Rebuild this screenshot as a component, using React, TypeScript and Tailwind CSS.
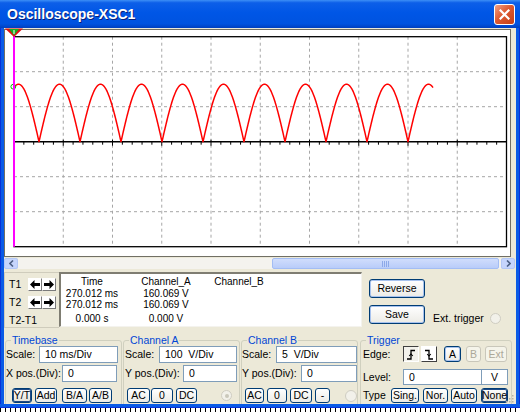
import React from 'react';

type Variant = 'normal' | 'selected' | 'focus' | 'disabled';

function XpButton({
  children,
  className = '',
  variant = 'normal',
}: {
  children: React.ReactNode;
  className?: string;
  variant?: Variant;
}) {
  const look =
    variant === 'disabled'
      ? 'border-[#C9C7BA] bg-[#F5F4EA] text-[#ACA899]'
      : variant === 'selected'
        ? 'border-[#003C74] bg-linear-to-b from-white to-[#E3E1D6] text-black shadow-[inset_0_0_0_1px_#1F4A86]'
        : variant === 'focus'
          ? 'border-[#003C74] bg-linear-to-b from-white to-[#ECEBE6] text-black shadow-[inset_0_0_0_1px_#A7C2EE]'
          : 'border-[#003C74] bg-linear-to-b from-white to-[#ECEBE6] text-black';
  return (
    <div className={`flex h-full items-center justify-center rounded-[3px] border text-[10.5px] leading-none ${look} ${className}`}>
      {children}
    </div>
  );
}

function Field({ children, className = '', center = false }: { children: React.ReactNode; className?: string; center?: boolean }) {
  return (
    <div
      className={`flex h-full items-center whitespace-pre border border-[#7F9DB9] bg-white text-[10.5px] leading-none ${center ? 'justify-center' : 'pl-[5px]'} ${className}`}
    >
      {children}
    </div>
  );
}

function Radio({ dot = false, className = '' }: { dot?: boolean; className?: string }) {
  return (
    <div className={`flex h-[11px] w-[11px] items-center justify-center rounded-full border border-[#CFCDC2] bg-[#F2F1EA] ${className}`}>
      {dot && <div className="h-[4px] w-[4px] rounded-full bg-[#CAC8BB]" />}
    </div>
  );
}

function ArrowBtn({ dir }: { dir: 'left' | 'right' }) {
  return (
    <div className="flex h-[13px] w-[14px] items-center justify-center border border-t-white border-l-white border-r-[#7A7A7A] border-b-[#7A7A7A] bg-white">
      <svg width="10" height="9" viewBox="0 0 10 9">
        {dir === 'left' ? (
          <path d="M0 4.5 L4.5 0 V3 H10 V6 H4.5 V9 Z" fill="#000" />
        ) : (
          <path d="M10 4.5 L5.5 0 V3 H0 V6 H5.5 V9 Z" fill="#000" />
        )}
      </svg>
    </div>
  );
}

function TitleBar() {
  return (
    <div className="flex h-[28px] items-center justify-between bg-[linear-gradient(180deg,#3D8FF6_0%,#0D5FE8_10%,#0056E6_45%,#0053E0_85%,#003FBF_100%)] pl-[7px] pr-[5px]">
      <span className="font-['Liberation_Sans_Narrow','Liberation_Sans',Arial,sans-serif] text-[14px] font-bold leading-none text-white [text-shadow:1px_1px_0_#0A1F78]">
        Oscilloscope-XSC1
      </span>
      <div className="flex h-[21px] w-[21px] items-center justify-center rounded-[3px] border border-white bg-[linear-gradient(135deg,#F3A185_0%,#DD5A32_45%,#C53E14_100%)]">
        <svg width="11" height="11" viewBox="0 0 11 11">
          <path d="M1.5 1.5 L9.5 9.5 M9.5 1.5 L1.5 9.5" stroke="#fff" strokeWidth="2.2" strokeLinecap="square" />
        </svg>
      </div>
    </div>
  );
}

function Plot() {
  const x0 = 9;
  const y0 = 6.7;
  const dx = 49.25;
  const dy = 35;
  const x1 = x0 + dx * 10;
  const y1 = y0 + dy * 6;
  const axis = y0 + dy * 3;

  const pts: string[] = [];
  for (let x = 9; x <= 428; x += 0.5) {
    const y = axis - 57.5 * Math.abs(Math.sin((Math.PI * (x - 34)) / 41));
    pts.push(`${x.toFixed(1)},${y.toFixed(2)}`);
  }

  const ticks = [];
  for (let k = 1; k < 50; k++) {
    const x = x0 + (k * dx) / 5;
    const major = k % 5 === 0;
    ticks.push(
      <line key={k} x1={x} x2={x} y1={major ? axis - 2 : axis} y2={major ? axis + 4 : axis + 3} stroke="#000" strokeWidth="1" />
    );
  }

  return (
    <svg width="505" height="226" viewBox="0 0 505 226" className="block overflow-visible">
      {[1, 2, 3, 4, 5, 6, 7, 8, 9].map((i) => (
        <line key={`v${i}`} x1={x0 + dx * i} x2={x0 + dx * i} y1={y0} y2={y1} stroke="#A6A6A6" strokeWidth="1" strokeDasharray="3 3" />
      ))}
      {[1, 2, 4, 5].map((j) => (
        <line key={`h${j}`} x1={x0} x2={x1} y1={y0 + dy * j} y2={y0 + dy * j} stroke="#A6A6A6" strokeWidth="1" strokeDasharray="3 3" />
      ))}
      <rect x={x0} y={y0} width={x1 - x0} height={y1 - y0} fill="none" stroke="#000" strokeWidth="1.3" />
      <line x1={x0} x2={x1} y1={axis} y2={axis} stroke="#000" strokeWidth="1.6" />
      {ticks}
      <polyline points={pts.join(' ')} fill="none" stroke="#FF0000" strokeWidth="1.5" strokeLinejoin="round" />
      <circle cx="8.3" cy="56.7" r="2.4" fill="none" stroke="#00C000" strokeWidth="1" />
      <line x1="9" x2="9" y1="-1" y2={y1} stroke="#FF00FF" strokeWidth="2" />
      <polygon points="0,-1.5 18,-1.5 9,7" fill="#E01010" />
      <polygon points="4,-1 14,-1 9,5.5" fill="#10B020" />
      <line x1="9" x2="9" y1="0" y2="4" stroke="#fff" strokeWidth="1" />
    </svg>
  );
}

function ScrollBar() {
  return (
    <div className="mt-[1px] flex h-[11px] w-[511px]">
      <div className="flex w-[14px] items-center justify-center rounded-[2px] border border-[#B4C8F6] bg-[#C6D5FC]">
        <svg width="5" height="7" viewBox="0 0 5 7">
          <path d="M4 0.5 L1 3.5 L4 6.5" fill="none" stroke="#4D6185" strokeWidth="1.6" />
        </svg>
      </div>
      <div className="flex flex-1 bg-[#F4F3EE] pl-[254px]">
        <div className="flex w-[227px] items-center justify-center gap-[1px] rounded-[2px] border border-[#A3BDF4] bg-linear-to-b from-[#D0DDFC] to-[#B9CCF9]">
          <div className="h-[6px] w-[1px] bg-[#8DA9E8]" />
          <div className="h-[6px] w-[1px] bg-[#8DA9E8]" />
          <div className="h-[6px] w-[1px] bg-[#8DA9E8]" />
          <div className="h-[6px] w-[1px] bg-[#8DA9E8]" />
        </div>
      </div>
      <div className="flex w-[14px] items-center justify-center rounded-[2px] border border-[#B4C8F6] bg-[#C6D5FC]">
        <svg width="5" height="7" viewBox="0 0 5 7">
          <path d="M1 0.5 L4 3.5 L1 6.5" fill="none" stroke="#4D6185" strokeWidth="1.6" />
        </svg>
      </div>
    </div>
  );
}

function Readout() {
  return (
    <div className="flex h-[56px]">
      <div className="flex w-[55px] flex-col border-l border-t border-b border-[#CFCCBC] pl-[4px] pt-[5px] text-[10.5px] leading-none">
        <div className="flex h-[13px] items-center">
          <span className="w-[19px]">T1</span>
          <ArrowBtn dir="left" />
          <ArrowBtn dir="right" />
        </div>
        <div className="mt-[5px] flex h-[13px] items-center">
          <span className="w-[19px]">T2</span>
          <ArrowBtn dir="left" />
          <ArrowBtn dir="right" />
        </div>
        <div className="mt-[5px] leading-[12px]">T2-T1</div>
      </div>
      <div className="h-[55px] w-[303px] border-t-2 border-l-2 border-r border-b border-t-[#7F7D72] border-l-[#7F7D72] border-r-[#F4F3EE] border-b-[#F4F3EE] bg-white pt-[2px] text-[10px] leading-[11.5px]">
        <div className="flex">
          <div className="w-[62px] text-center">Time</div>
          <div className="w-[86px] text-center">Channel_A</div>
          <div className="w-[60px] text-center">Channel_B</div>
        </div>
        <div className="flex">
          <div className="w-[62px] text-center">270.012 ms</div>
          <div className="w-[86px] text-center">160.069 V</div>
        </div>
        <div className="flex">
          <div className="w-[62px] text-center">270.012 ms</div>
          <div className="w-[86px] text-center">160.069 V</div>
        </div>
        <div className="mt-[2px] flex">
          <div className="w-[62px] text-center">0.000 s</div>
          <div className="w-[86px] text-center">0.000 V</div>
        </div>
      </div>
      <div className="ml-[7px] flex w-[56px] flex-col pt-[7px]">
        <div className="h-[19px]">
          <XpButton variant="focus">Reverse</XpButton>
        </div>
        <div className="mt-[7px] h-[19px]">
          <XpButton variant="focus">Save</XpButton>
        </div>
      </div>
      <div className="ml-[8px] flex h-[12px] items-center self-end mb-[4px] text-[10.5px] leading-none">
        <span>Ext. trigger</span>
        <Radio className="ml-[6px]" />
      </div>
    </div>
  );
}

function Group({ title, className, children }: { title: string; className: string; children: React.ReactNode }) {
  return (
    <fieldset className={`m-0 h-[74px] min-w-0 rounded-[3px] border border-[#D0D0BF] p-0 ${className}`}>
      <legend className="ml-[5px] px-[1px] text-[10.5px] leading-[12px] text-[#0046D5]">{title}</legend>
      {children}
    </fieldset>
  );
}

function Controls() {
  return (
    <div className="mt-[6px] flex text-[10.5px] leading-none">
      <Group title="Timebase" className="ml-[1px] w-[117px]">
        <div className="flex h-[17px] items-center">
          <span className="w-[33px]">Scale:</span>
          <Field className="w-[79px]">10 ms/Div</Field>
        </div>
        <div className="mt-[2px] flex h-[17px] items-center">
          <span className="w-[56px]">X pos.(Div):</span>
          <Field className="w-[55px]">0</Field>
        </div>
        <div className="mt-[6px] flex h-[15px] pl-[6px]">
          <XpButton variant="selected" className="w-[20px]">Y/T</XpButton>
          <XpButton className="ml-[3px] w-[22px]">Add</XpButton>
          <XpButton className="ml-[5px] w-[25px]">B/A</XpButton>
          <XpButton className="ml-[2px] w-[23px]">A/B</XpButton>
        </div>
      </Group>
      <Group title="Channel A" className="ml-[1px] w-[117px]">
        <div className="flex h-[17px] items-center pl-[1px]">
          <span className="w-[34px]">Scale:</span>
          <Field className="w-[78px]">100  V/Div</Field>
        </div>
        <div className="mt-[2px] flex h-[17px] items-center pl-[1px]">
          <span className="w-[58px]">Y pos.(Div):</span>
          <Field className="w-[54px]">0</Field>
        </div>
        <div className="mt-[6px] flex h-[15px] items-center pl-[3px]">
          <XpButton className="w-[23px]">AC</XpButton>
          <XpButton className="ml-[1px] w-[22px]">0</XpButton>
          <XpButton className="ml-[3px] w-[21px]">DC</XpButton>
          <Radio dot className="ml-[24px]" />
        </div>
      </Group>
      <Group title="Channel B" className="ml-[1px] w-[117px]">
        <div className="flex h-[17px] items-center">
          <span className="w-[34px]">Scale:</span>
          <Field className="w-[81px]">5  V/Div</Field>
        </div>
        <div className="mt-[2px] flex h-[17px] items-center">
          <span className="w-[59px]">Y pos.(Div):</span>
          <Field className="w-[56px]">0</Field>
        </div>
        <div className="mt-[6px] flex h-[15px] items-center pl-[3px]">
          <XpButton className="w-[19px]">AC</XpButton>
          <XpButton className="ml-[3px] w-[20px]">0</XpButton>
          <XpButton className="ml-[3px] w-[22px]">DC</XpButton>
          <XpButton className="ml-[3px] w-[15px]">-</XpButton>
          <Radio className="ml-[15px] h-[12px] w-[12px]" />
        </div>
      </Group>
      <Group title="Trigger" className="ml-[2px] w-[152px]">
        <div className="flex h-[16px] items-center pl-[2px]">
          <span className="w-[40px]">Edge:</span>
          <div className="flex h-full w-[16px] items-center justify-center border border-t-[#404040] border-l-[#404040] border-r-white border-b-white bg-[#F3F2EC]">
            <svg width="10" height="11" viewBox="0 0 10 11">
              <path d="M1 10 H5 V1.5 H9" fill="none" stroke="#000" strokeWidth="1.3" />
              <path d="M3.2 7 L5 5 L6.8 7" fill="none" stroke="#000" strokeWidth="1.1" />
            </svg>
          </div>
          <div className="ml-[2px] flex h-full w-[16px] items-center justify-center border border-t-white border-l-white border-r-[#404040] border-b-[#404040] bg-white">
            <svg width="10" height="11" viewBox="0 0 10 11">
              <path d="M1 1.5 H5 V10 H9" fill="none" stroke="#000" strokeWidth="1.3" />
              <path d="M3.2 5 L5 7 L6.8 5" fill="none" stroke="#000" strokeWidth="1.1" />
            </svg>
          </div>
          <XpButton variant="focus" className="ml-[7px] w-[17px]">A</XpButton>
          <XpButton variant="disabled" className="ml-[5px] w-[15px]">B</XpButton>
          <XpButton variant="disabled" className="ml-[4px] w-[22px]">Ext</XpButton>
        </div>
        <div className="mt-[7px] flex h-[16px] items-center pl-[2px]">
          <span className="w-[40px]">Level:</span>
          <Field className="w-[79px] pl-[4px]">0</Field>
          <Field center className="w-[26px] border-l-0">V</Field>
        </div>
        <div className="mt-[3px] flex h-[15px] items-center pl-[2px]">
          <span className="w-[28px]">Type</span>
          <XpButton className="w-[28px]">Sing.</XpButton>
          <XpButton className="ml-[4px] w-[25px]">Nor.</XpButton>
          <XpButton className="ml-[3px] w-[26px]">Auto</XpButton>
          <XpButton variant="selected" className="ml-[4px] w-[27px]">None</XpButton>
        </div>
      </Group>
    </div>
  );
}

export default function App() {
  return (
    <div className="relative h-[412px] w-[520px] overflow-hidden bg-white font-['Liberation_Sans',Arial,sans-serif] text-black">
      <TitleBar />
      <div className="flex h-[376px]">
        <div className="w-[4px] border-l border-[#0831D9] bg-[#0A5BE6]" />
        <div className="flex w-[512px] flex-col bg-[#ECE9D8]">
          <div className="mt-[1px] h-[228px] w-[507px] border border-[#716F64] bg-white">
            <Plot />
          </div>
          <ScrollBar />
          <div className="relative flex-1 overflow-hidden pt-[3px]">
            <Readout />
            <Controls />
            <svg width="8" height="8" viewBox="0 0 8 8" className="absolute right-[2px] bottom-[1px]">
              {[
                [6, 0],
                [6, 3],
                [3, 3],
                [6, 6],
                [3, 6],
                [0, 6],
              ].map(([x, y], i) => (
                <rect key={i} x={x} y={y} width="1.5" height="1.5" fill="#B5B2A3" />
              ))}
            </svg>
          </div>
        </div>
        <div className="w-[4px] border-r border-[#0831D9] bg-[#0A5BE6]" />
      </div>
      <div className="h-[4px] bg-[#0A5BE6] border-b border-[#0831D9]" />
      <div className="h-[4px] bg-[repeating-linear-gradient(90deg,#000_0_1px,#fff_1px_5px)]" />
    </div>
  );
}
